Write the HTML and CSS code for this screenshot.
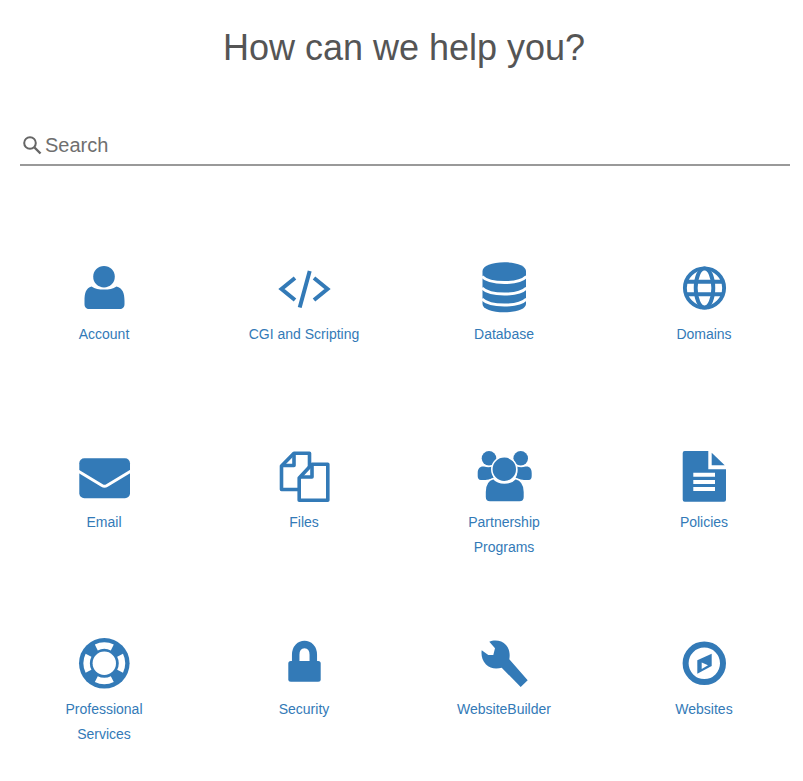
FILE: index.html
```html
<!DOCTYPE html>
<html lang="en">
<head>
    <meta charset="UTF-8">
    <meta name="viewport" content="width=device-width, initial-scale=1.0">
    <title>Help Center</title>
    <link rel="stylesheet" href="styles.css">
</head>
<body>
    <h1 class="title">How can we help you?</h1>

    <form class="search">
        <svg class="search-icon" viewBox="0 0 20 20" width="20" height="20">
            <circle cx="8" cy="8" r="5.800" fill="none" stroke="#666" stroke-width="2"/>
            <path d="M12.500 12.500L18.500 18.500" stroke="#666" stroke-width="2.400"/>
        </svg>
        <input class="search-input" type="text" placeholder="Search">
    </form>

    <div class="topics">
        <a class="topic" href="#">
            <svg class="topic-icon" viewBox="0 0 60 60">
                <circle cx="30" cy="18.700" r="10.800"/>
                <path d="M17.500 28.500C21 31.200 25 31.500 30 31.500S39 31.200 42.500 28.500C48.500 30 50.500 35 50.500 43V46C50.500 49.500 48.500 51 46 51H15C12.500 51 10.500 49.500 10.500 46V43C10.500 35 12 30 17.500 28.500Z"/>
            </svg>
            <span class="topic-label">Account</span>
        </a>
        <a class="topic" href="#">
            <svg class="topic-icon" viewBox="0 0 60 60">
                <path class="line code" d="M21 20L7.500 31L21 42M40 20L53.500 31L40 42M35.700 13L25.700 49.500"/>
            </svg>
            <span class="topic-label">CGI and Scripting</span>
        </a>
        <a class="topic" href="#">
            <svg class="topic-icon" viewBox="0 0 60 60">
                <path d="M8.500 13C8.500 8 18 4.300 30.300 4.300S52 8 52 13V46C52 51 42.500 54.300 30.300 54.300S8.500 51 8.500 46Z"/>
                <path class="cut" d="M8 18.500C12 22.500 20 24.500 30.300 24.500S48.500 22.500 52.500 18.500M8 30C12 34 20 36 30.300 36S48.500 34 52.500 30M8 41C12 45 20 47 30.300 47S48.500 45 52.500 41"/>
            </svg>
            <span class="topic-label">Database</span>
        </a>
        <a class="topic" href="#">
            <svg class="topic-icon" viewBox="0 0 60 60">
                <g class="line globe">
                    <circle cx="30.500" cy="30" r="19.600"/>
                    <ellipse cx="30.500" cy="30" rx="8.800" ry="19.600"/>
                    <path d="M12 23.800H49M12 36.200H49"/>
                </g>
            </svg>
            <span class="topic-label">Domains</span>
        </a>

        <a class="topic" href="#">
            <svg class="topic-icon" viewBox="0 0 60 60">
                <rect x="5.300" y="12.300" width="50.700" height="40" rx="5"/>
                <path class="cut" d="M4 25L28 39.500Q30.500 41 33 39.500L57 25"/>
            </svg>
            <span class="topic-label">Email</span>
        </a>
        <a class="topic" href="#">
            <svg class="topic-icon" viewBox="0 0 60 60">
                <g class="line page">
                    <path d="M20 7.200H35.500V43.500H7.500V20Z"/>
                    <path d="M20 7.200V19.500H8"/>
                    <path class="page-fill" d="M38 18.200H53.800V54.200H25.200V32Z"/>
                    <path d="M38 18.200V31H26"/>
                </g>
            </svg>
            <span class="topic-label">Files</span>
        </a>
        <a class="topic" href="#">
            <svg class="topic-icon" viewBox="0 0 60 60">
                <circle cx="15" cy="12.300" r="7.300"/>
                <circle cx="46.700" cy="12.300" r="7.300"/>
                <path d="M3.700 27C3.700 22.500 6 20 10 20.500C13 21.500 15.500 21.500 19 20.500C17.500 25 18 29 20 32C16 33 13 34 11.500 34H7C4.500 34 3.700 32 3.700 30Z"/>
                <path d="M57.700 27C57.700 22.500 55.500 20 51.500 20.500C48.500 21.500 46 21.500 42.500 20.500C44 25 43.500 29 41.500 32C45.500 33 48.500 34 50 34H54.500C57 34 57.700 32 57.700 30Z"/>
                <circle class="ringed" cx="30.300" cy="23.300" r="12.500"/>
                <path class="ringed" d="M19.500 32.500C22.500 36 26 37 30.500 37S38.500 36 41.500 32.500C47.500 34 50.500 39 50.500 46V51C50.500 54 48.500 56 45.500 56H16C13 56 11 54 11 51V46C11 39 13.500 34 19.500 32.500Z"/>
            </svg>
            <span class="topic-label">Partnership Programs</span>
        </a>
        <a class="topic" href="#">
            <svg class="topic-icon" viewBox="0 0 60 60">
                <path d="M10.700 5H34.300V23.300H52V53.700Q52 55.700 50 55.700H10.700Q8.700 55.700 8.700 53.700V7Q8.700 5 10.700 5Z"/>
                <path d="M37.700 6.700V19.300H50.700Z"/>
                <path class="cut bars" d="M19.300 28.700H41M19.300 36H41M19.300 43H41"/>
            </svg>
            <span class="topic-label">Policies</span>
        </a>

        <a class="topic" href="#">
            <svg class="topic-icon" viewBox="0 0 60 60">
                <circle cx="30.300" cy="30.300" r="25.300"/>
                <circle class="buoy-gaps" cx="30.300" cy="30.300" r="17.700" pathLength="100"/>
                <circle class="hole" cx="30.300" cy="30.300" r="11.700"/>
            </svg>
            <span class="topic-label">Professional Services</span>
        </a>
        <a class="topic" href="#">
            <svg class="topic-icon" viewBox="0 0 60 60">
                <rect x="14.300" y="28" width="32.400" height="20.700" rx="2.500"/>
                <path class="line shackle" d="M21.700 30V21.800C21.700 8 39.300 8 39.300 21.800V30"/>
            </svg>
            <span class="topic-label">Security</span>
        </a>
        <a class="topic" href="#">
            <svg class="topic-icon" viewBox="0 0 60 60">
                <path d="M15.300 8.700C20 6.800 28 7 32 12C35.500 16 36.200 21 35.300 26.300L53.700 47.300L46.700 54L27.700 34.700C23 36 16 36 12 31.500C8 27.500 7 22 7.700 17.300L14.300 22L19.300 22L21 15.300Z"/>
            </svg>
            <span class="topic-label">WebsiteBuilder</span>
        </a>
        <a class="topic" href="#">
            <svg class="topic-icon" viewBox="0 0 60 60">
                <circle class="line ring" cx="30.300" cy="30.300" r="18.700"/>
                <path d="M23.300 27.300L37.700 20.700V33L23.300 40.700Z"/>
                <path class="hole" d="M27.700 29.500L34 32.300L27.700 36Z"/>
            </svg>
            <span class="topic-label">Websites</span>
        </a>
    </div>
</body>
</html>
```

FILE: styles.css
```css
body {
    margin: 0;
    font-family: "Liberation Sans", Arial, sans-serif;
    background-color: white;
}
.title {
    margin: 0;
    padding: 28px 0 0 5px;
    font-size: 36px;
    line-height: 40px;
    font-weight: normal;
    text-align: center;
    color: #555;
}
.search {
    display: flex;
    align-items: center;
    gap: 3px;
    height: 38px;
    margin: 58px 13px 0 20px;
    border-bottom: 2px solid #999;
}
.search-icon {
    flex: none;
    margin-left: 2px;
}
.search-input {
    flex: 1;
    min-width: 0;
    padding: 0;
    border: none;
    outline: none;
    font-family: inherit;
    font-size: 20px;
    color: #666;
}
.search-input::placeholder {
    color: #6f6f6f;
    opacity: 1;
}
.topics {
    display: grid;
    grid-template-columns: repeat(4, 198px);
    grid-auto-rows: 140px;
    gap: 47.5px 2px;
    margin-top: 92px;
    padding-left: 5px;
}
.topic {
    display: flex;
    flex-direction: column;
    align-items: center;
    color: #337ab7;
    text-decoration: none;
    font-size: 14px;
    line-height: 25px;
    text-align: center;
}
.topic-icon {
    flex: none;
    width: 60px;
    height: 60px;
    fill: #337ab7;
}
.topic-label {
    max-width: 120px;
    margin-top: 4px;
}
.line {
    fill: none;
    stroke: #337ab7;
    stroke-width: 3.500;
}
.code {
    stroke-width: 4;
}
.globe {
    stroke-width: 3.900;
}
.page {
    stroke-width: 3.600;
    stroke-linejoin: round;
}
.page-fill {
    fill: white;
}
.shackle {
    stroke-width: 7.500;
}
.ring {
    stroke-width: 6;
}
.cut {
    fill: none;
    stroke: white;
    stroke-width: 3;
}
.bars {
    stroke-width: 4;
}
.hole {
    fill: white;
}
.ringed {
    stroke: white;
    stroke-width: 1.600;
}
.buoy-gaps {
    fill: none;
    stroke: white;
    stroke-width: 6.500;
    stroke-dasharray: 15 10;
    stroke-dashoffset: 7.500;
}
```
